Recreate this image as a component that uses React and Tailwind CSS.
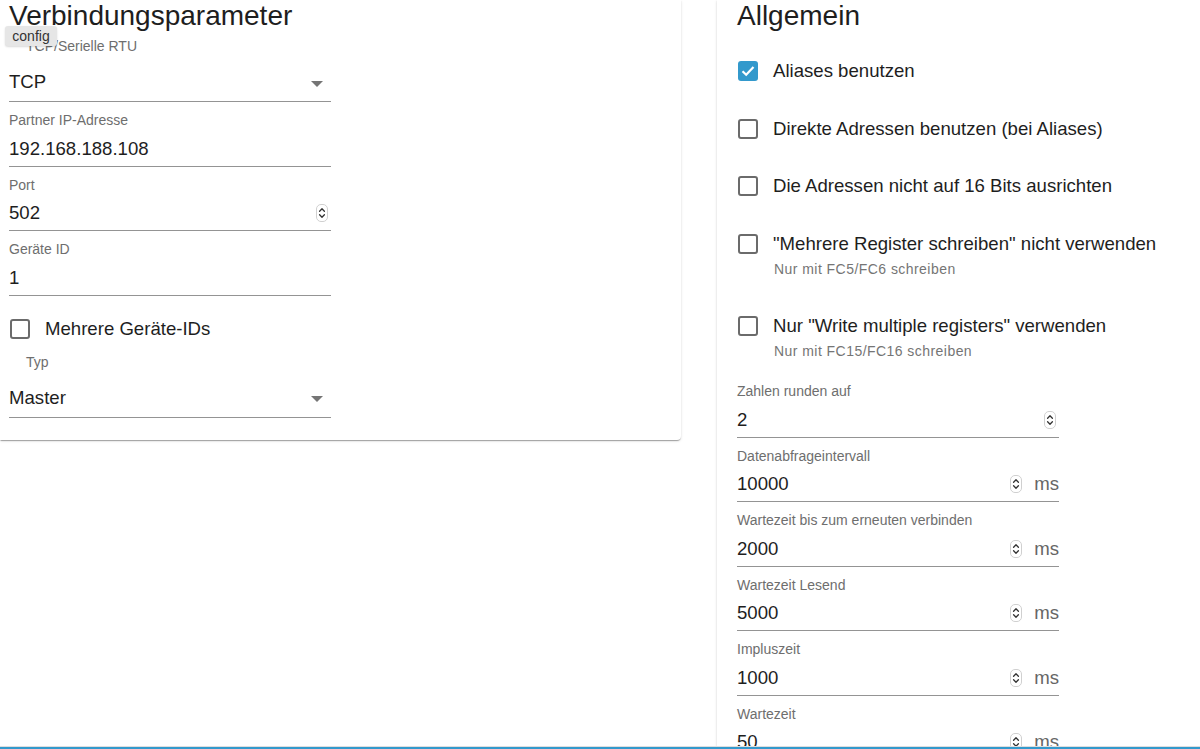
import React from 'react';

const cardShadow =
  'shadow-[0_2px_1px_-1px_rgba(0,0,0,0.2),0_1px_1px_0_rgba(0,0,0,0.14),0_1px_3px_0_rgba(0,0,0,0.12)]';

function Spinner() {
  return (
    <svg width="12" height="18" viewBox="0 0 12 18" className="shrink-0">
      <rect x="0.5" y="0.5" width="11" height="17" rx="4.5" fill="#fff" stroke="#d0d0d0" />
      <path d="M3.6 7.2 L6 4.8 L8.4 7.2" fill="none" stroke="#333" strokeWidth="1.3" strokeLinecap="round" strokeLinejoin="round" />
      <path d="M3.6 10.8 L6 13.2 L8.4 10.8" fill="none" stroke="#333" strokeWidth="1.3" strokeLinecap="round" strokeLinejoin="round" />
    </svg>
  );
}

function Arrow() {
  return (
    <svg width="12" height="6" viewBox="0 0 12 6" className="shrink-0 mr-[8px] mt-[3px]">
      <path d="M0 0 L12 0 L6 6 Z" fill="#757575" />
    </svg>
  );
}

// border-box: the underline is part of the row height
function Field({ label, value, unit, spinner = true, top = 'pt-[10px]' }) {
  return (
    <div className={`w-[322px] ${top}`}>
      <div className="h-[16px] leading-[16px] text-[14px] text-[#6e6e6e]">{label}</div>
      <div className="mt-[4px] h-[34.5px] flex items-center border-b border-[#949494]">
        <span className="flex-1 text-[18.6px] text-[#1e1e1e]">{value}</span>
        {spinner && <Spinner />}
        {unit ? (
          <span className="ml-[12px] text-[18.6px] text-[#666]">{unit}</span>
        ) : (
          <span className="w-[3px]" />
        )}
      </div>
    </div>
  );
}

function SelectField({ label, value, gap = 'mt-[6px]' }) {
  return (
    <div className="w-[322px]">
      <div className={`${gap} h-[16px] leading-[16px] pl-[17px] text-[14px] text-[#6e6e6e]`}>{label}</div>
      <div className="mt-[9px] h-[39px] flex items-center border-b border-[#949494]">
        <span className="flex-1 text-[18.6px] text-[#1e1e1e]">{value}</span>
        <Arrow />
      </div>
    </div>
  );
}

function Box({ checked }) {
  if (checked) {
    return (
      <span className="w-[20px] h-[20px] rounded-[3px] bg-[#3399cc] flex items-center justify-center shrink-0">
        <svg width="14" height="12" viewBox="0 0 14 12">
          <path d="M1.5 6.2 L5.2 9.8 L12.5 2" fill="none" stroke="#fff" strokeWidth="2.2" />
        </svg>
      </span>
    );
  }
  return <span className="w-[20px] h-[20px] rounded-[3px] border-2 border-[#6b6b6b] shrink-0" />;
}

function Check({ checked, label, helper, className = '' }) {
  return (
    <div className={className}>
      <div className="h-[24px] flex items-center gap-[15px] ml-[1px]">
        <Box checked={checked} />
        <span className="text-[18.6px] text-[#1e1e1e] whitespace-nowrap">{label}</span>
      </div>
      {helper && (
        <div className="mt-[5px] h-[16px] leading-[16px] pl-[37px] text-[14px] tracking-[0.45px] text-[#757575]">
          {helper}
        </div>
      )}
    </div>
  );
}

export default function App() {
  return (
    <div className="w-[1200px] h-[749px] overflow-hidden bg-white flex flex-col font-['Liberation_Sans',Arial,sans-serif]">
      <div className="flex-1 min-h-0 flex items-start overflow-hidden">
        {/* Verbindungsparameter */}
        <div className={`relative w-[681px] shrink-0 bg-white rounded-br-[4px] pl-[9px] pb-[22px] ${cardShadow}`}>
          <h2 className="h-[32px] leading-[32px] text-[28px] text-[#1e1e1e] whitespace-nowrap">Verbindungsparameter</h2>
          <SelectField label="TCP/Serielle RTU" value="TCP" />
          <Field label="Partner IP-Adresse" value="192.168.188.108" spinner={false} />
          <Field label="Port" value="502" />
          <Field label="Geräte ID" value="1" spinner={false} />
          <Check label="Mehrere Geräte-IDs" className="mt-[21px]" />
          <SelectField label="Typ" value="Master" gap="mt-[13px]" />

          <div className="absolute left-[5px] top-[26px] w-[52px] h-[20px] rounded-[3px] bg-[#e6e6e6] shadow-[0_1px_2px_rgba(0,0,0,0.15)] flex items-center justify-center text-[14px] text-[#333]">
            config
          </div>
        </div>

        <div className="w-[36px] shrink-0" />

        {/* Allgemein */}
        <div className={`flex-1 self-stretch bg-white pl-[20px] ${cardShadow}`}>
          <h2 className="h-[32px] leading-[32px] text-[28px] text-[#1e1e1e]">Allgemein</h2>
          <Check checked label="Aliases benutzen" className="mt-[27px]" />
          <Check label="Direkte Adressen benutzen (bei Aliases)" className="mt-[34px]" />
          <Check label="Die Adressen nicht auf 16 Bits ausrichten" className="mt-[33px]" />
          <Check
            label={'"Mehrere Register schreiben" nicht verwenden'}
            helper="Nur mit FC5/FC6 schreiben"
            className="mt-[34px]"
          />
          <Check
            label={'Nur "Write multiple registers" verwenden'}
            helper="Nur mit FC15/FC16 schreiben"
            className="mt-[37px]"
          />
          <Field label="Zahlen runden auf" value="2" top="pt-[24px]" />
          <Field label="Datenabfrageintervall" value="10000" unit="ms" />
          <Field label="Wartezeit bis zum erneuten verbinden" value="2000" unit="ms" />
          <Field label="Wartezeit Lesend" value="5000" unit="ms" />
          <Field label="Impluszeit" value="1000" unit="ms" />
          <Field label="Wartezeit" value="50" unit="ms" />
        </div>
      </div>
      <div className="h-[3px] shrink-0 border-t border-[#dedede] bg-[#3399cc]" />
    </div>
  );
}
